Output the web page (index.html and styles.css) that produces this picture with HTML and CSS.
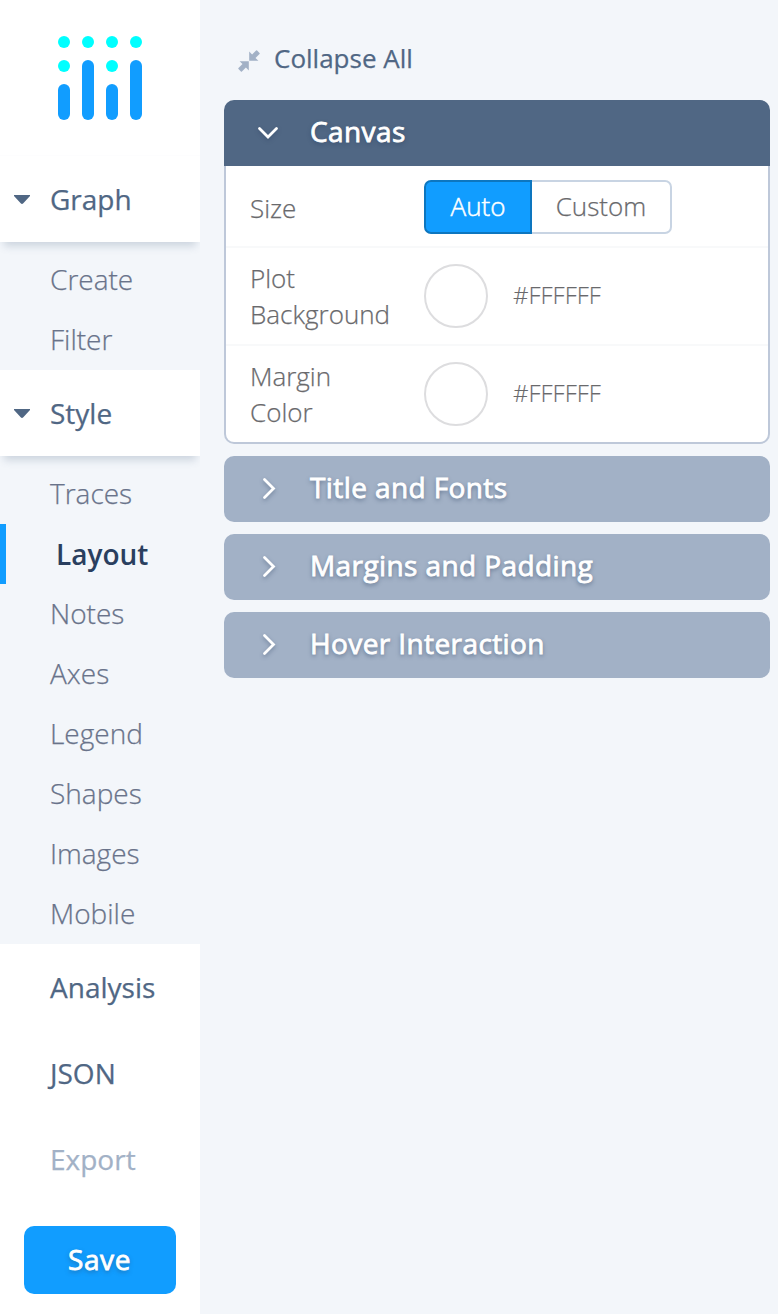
FILE: index.html
```html
<!DOCTYPE html>
<html lang="en">
<head>
<meta charset="utf-8">
<title>Chart Editor</title>
<link rel="stylesheet" href="styles.css">
</head>
<body>
<div class="editor">
  <aside class="sidebar">
    <div class="logo">
      <svg width="84" height="84" viewBox="0 0 84 84">
        <g fill="#0ff"><circle cx="6" cy="6" r="6"/><circle cx="30" cy="6" r="6"/><circle cx="54" cy="6" r="6"/><circle cx="78" cy="6" r="6"/><circle cx="6" cy="30" r="6"/><circle cx="54" cy="30" r="6"/></g>
        <g fill="#119dff"><rect y="48" width="12" height="36" rx="6"/><rect x="24" y="24" width="12" height="60" rx="6"/><rect x="48" y="48" width="12" height="36" rx="6"/><rect x="72" y="24" width="12" height="60" rx="6"/></g>
      </svg>
    </div>
    <nav>
      <div class="section open"><svg class="caret" width="16" height="9" viewBox="0 0 16 9"><path d="M0 0h16v1L9.300 8.200Q8 9.600 6.700 8.200L0 1z"/></svg><span>Graph</span></div>
      <ul class="items">
        <li>Create</li>
        <li>Filter</li>
      </ul>
      <div class="section open"><svg class="caret" width="16" height="9" viewBox="0 0 16 9"><path d="M0 0h16v1L9.300 8.200Q8 9.600 6.700 8.200L0 1z"/></svg><span>Style</span></div>
      <ul class="items">
        <li>Traces</li>
        <li class="active">Layout</li>
        <li>Notes</li>
        <li>Axes</li>
        <li>Legend</li>
        <li>Shapes</li>
        <li>Images</li>
        <li>Mobile</li>
      </ul>
      <div class="section"><span>Analysis</span></div>
      <div class="section"><span>JSON</span></div>
      <div class="section disabled"><span>Export</span></div>
    </nav>
    <button class="save">Save</button>
  </aside>
  <main class="panel">
    <div class="collapse">
      <svg width="22" height="22" viewBox="0 0 22 22"><path d="M11.200 1.600v9.200h9.200L17.500 7.900l4-4Q22 3.400 21.500 2.900L19.100.5Q18.600 0 18.100.5l-4 4zM1.600 11.200h9.200v9.200L7.900 17.500l-4 4Q3.400 22 2.900 21.500L.5 19.100Q0 18.600.5 18.100l4-4z"/></svg>
      <span>Collapse All</span>
    </div>
    <section class="fold expanded">
      <header class="fold-head"><svg class="chevron" width="22" height="22" viewBox="0 0 22 22"><path d="M1.500 6.500l8.500 8.500 8.500-8.500"/></svg><span>Canvas</span></header>
      <div class="fold-body">
        <div class="field size">
          <label>Size</label>
          <div class="toggle"><button class="on">Auto</button><button>Custom</button></div>
        </div>
        <div class="field">
          <label>Plot Background</label>
          <span class="swatch"></span><span class="hex">#FFFFFF</span>
        </div>
        <div class="field">
          <label>Margin<br>Color</label>
          <span class="swatch"></span><span class="hex">#FFFFFF</span>
        </div>
      </div>
    </section>
    <section class="fold"><header class="fold-head"><svg class="chevron" width="22" height="22" viewBox="0 0 22 22"><path d="M6.500 1.500l9 9-9 9"/></svg><span>Title and Fonts</span></header></section>
    <section class="fold"><header class="fold-head"><svg class="chevron" width="22" height="22" viewBox="0 0 22 22"><path d="M6.500 1.500l9 9-9 9"/></svg><span>Margins and Padding</span></header></section>
    <section class="fold"><header class="fold-head"><svg class="chevron" width="22" height="22" viewBox="0 0 22 22"><path d="M6.500 1.500l9 9-9 9"/></svg><span>Hover Interaction</span></header></section>
  </main>
</div>
</body>
</html>
```
FILE: styles.css
```css
* { box-sizing: border-box; }
body { margin: 0; background: #f3f6fa; font-family: "Open Sans", sans-serif; -webkit-text-stroke: 0.25px; }
button { font: inherit; cursor: pointer; }
.editor { display: flex; height: 1314px; }

.sidebar { width: 200px; background: #fff; font-size: 28px; color: #506784; }
.logo { height: 156px; padding: 36px 58px 0; border-bottom: 1px solid #fdfdfe; }
.logo svg { display: block; }
.section { display: flex; align-items: center; height: 86px; padding: 0 0 0 50px; }
.section span { line-height: 38px; }
.section.open { padding-left: 14px; gap: 20px; box-shadow: 0 8px 8px -4px rgba(80, 103, 132, 0.24); position: relative; clip-path: inset(0 0 -20px 0); background: #fff; }
.caret { fill: #506784; display: block; }
.section.disabled { color: #a2b1c6; }
.items { list-style: none; margin: 0; padding: 8px 0 0; background: #f3f6fa; color: #69738a; font-weight: 300; }
.items li { height: 60px; line-height: 58px; padding-left: 50px; }
.items .active { border-left: 6px solid #119dff; font-weight: 600; line-height: 60px; color: #2a3f5f; -webkit-text-stroke: 0; }
.save { display: block; width: 152px; height: 68px; margin: 24px 0 0 24px; padding: 0 1px 2px 0; border: 0; border-radius: 10px; background: #119dff; color: #fff; font-weight: 400; letter-spacing: 0.6px; text-shadow: 0 2px 4px rgba(42, 63, 95, 0.5); -webkit-text-stroke: 0.8px; }

.panel { flex: 1; padding: 0 8px 0 24px; }
.collapse { display: flex; align-items: center; gap: 14px; height: 100px; padding: 17px 0 0 14px; font-size: 26px; color: #506784; }
.collapse svg { fill: #a2b1c6; margin-top: 5px; }
.collapse span { padding-bottom: 1px; }
.fold { margin-bottom: 12px; }
.fold-head { display: flex; align-items: center; height: 66px; padding-left: 34px; border-radius: 10px; background: #a2b1c6; color: #fff; font-size: 28px; font-weight: 400; letter-spacing: 0.4px; text-shadow: 0 2px 4px rgba(42, 63, 95, 0.6); -webkit-text-stroke: 0.8px; }
.fold-head span { margin-left: 30px; padding-bottom: 4px; }
.chevron { fill: none; stroke: #fff; stroke-width: 2.800; stroke-linecap: round; filter: drop-shadow(0 2px 2px rgba(42, 63, 95, 0.4)); overflow: visible; }
.expanded .fold-head { background: #506784; border-radius: 10px 10px 0 0; }
.fold-body { background: #fff; border: 2px solid #bec8d9; border-top: 0; border-radius: 0 0 10px 10px; }
.field { display: flex; align-items: center; height: 98px; padding-left: 24px; border-bottom: 2px solid #f8f9fa; color: #69696c; font-size: 26px; font-weight: 300; }
.field:last-child { height: 96px; border-bottom: 0; }
.field.size { height: 82px; }
.field label { width: 174px; line-height: 36px; }
.size label { padding-top: 4px; }
.toggle { display: flex; margin-top: 2px; }
.toggle button { width: 140px; height: 54px; padding: 0 0 2px; border: 2px solid #c8d4e3; border-left: 0; border-radius: 0 7px 7px 0; background: #fff; color: #69696c; line-height: 46px; }
.toggle .on { width: 108px; border: 2px solid #0d76bf; border-radius: 7px 0 0 7px; background: #119dff; color: #fff; -webkit-text-stroke: 0.5px; }
.swatch { width: 64px; height: 64px; border: 2px solid #dddddf; border-radius: 50%; background: #fff; }
.hex { margin-left: 25px; padding-bottom: 4px; font-size: 24px; -webkit-text-stroke: 0.1px; }
```
